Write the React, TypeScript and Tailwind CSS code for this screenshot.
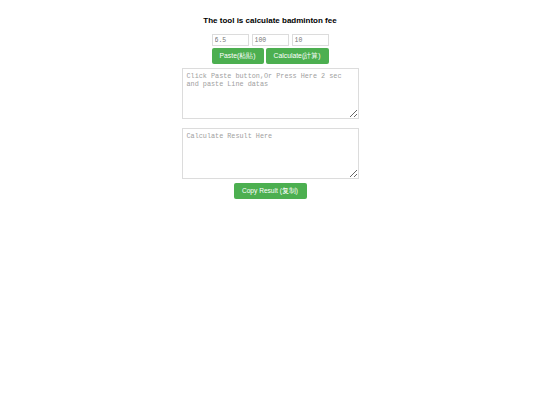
import React from "react";

export default function App() {
  return (
    <div className="min-h-screen w-full bg-white font-['Liberation_Sans',Arial,sans-serif]">
      <div className="flex flex-col items-center pt-[15px]">
        <h1 className="text-[8px] font-bold leading-[11px] text-black">
          The tool is calculate badminton fee
        </h1>
        <div className="mt-[8px] flex gap-[3px]">
          {["6.5", "100", "10"].map((v) => (
            <input
              key={v}
              defaultValue={v}
              className="h-[12px] w-[37px] border border-[#dcdcdc] px-[2px] font-['Liberation_Mono',monospace] text-[6.5px] text-[#777] outline-none"
            />
          ))}
        </div>
        <div className="mt-[2px] flex gap-[2px]">
          <button className="h-[16px] w-[52px] rounded-[2px] bg-[#4caf50] text-[6.8px] text-white">
            Paste(粘貼)
          </button>
          <button className="h-[16px] w-[63px] rounded-[2px] bg-[#4caf50] text-[6.8px] text-white">
            Calculate(計算)
          </button>
        </div>
        <textarea
          placeholder="Click Paste button,Or Press Here 2 sec and paste Line datas"
          className="mt-[4px] h-[51px] w-[177px] border border-[#dcdcdc] px-[4px] py-[3px] font-['Liberation_Mono',monospace] text-[6.8px] leading-[8px] placeholder:text-[#a0a0a0] outline-none"
        />
        <textarea
          placeholder="Calculate Result Here"
          className="mt-[9px] h-[51px] w-[177px] border border-[#dcdcdc] px-[4px] py-[3px] font-['Liberation_Mono',monospace] text-[6.8px] leading-[8px] placeholder:text-[#a0a0a0] outline-none"
        />
        <button className="mt-[4px] h-[16px] w-[73px] rounded-[2px] bg-[#4caf50] text-[6.6px] text-white">
          Copy Result (复制)
        </button>
      </div>
    </div>
  );
}
